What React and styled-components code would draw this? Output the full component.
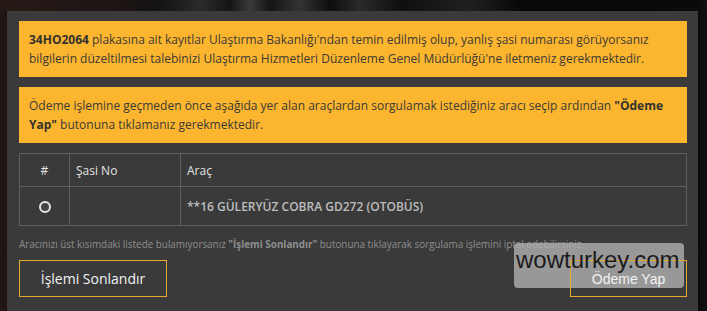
import React, { useState } from "react";
import styled, { createGlobalStyle } from "styled-components";

const GlobalStyle = createGlobalStyle`
  html, body {
    margin: 0;
    padding: 0;
    height: 100%;
  }
  body {
    background: linear-gradient(90deg, #221715 0px, #1e1513 7px, #141010 60px, #0c0c0c 200px, #0a0a0a 698px, #111 707px);
    font-family: "Open Sans", "Noto Sans", sans-serif;
    overflow: hidden;
  }
`;

const Backdrop = styled.div`
  width: 707px;
  height: 311px;
  display: flex;
  flex-direction: column;
  background: linear-gradient(90deg, #261a17 0, #1e1514 110px, #141212 160px, #2b2b2b 200px, #141414 230px, #3a3a3a 250px, #151515 270px, #333 300px, #0e0e0e 330px, #2a2a2a 360px, #0f0f0f 400px, #202020 470px, #080808 520px, #0a0a0a 698px, #121212 707px) top / 707px 11px no-repeat;
`;

const Panel = styled.div`
  margin: 11px 0 0 7px;
  width: 691px;
  flex: 1;
  box-sizing: border-box;
  background: #3a3a3a;
  padding: 10px 11px 0 12px;
  display: flex;
  flex-direction: column;
  position: relative;
`;

const Notice = styled.div`
  background: #fbb52f;
  color: #3c3a36;
  font-size: 12px;
  line-height: 19px;
  padding: 9px 10px;
  margin-bottom: 10px;
  b {
    font-weight: 700;
    color: #34322e;
  }
`;

const Table = styled.table`
  border-collapse: collapse;
  width: 100%;
  color: #dcdcdc;
  font-size: 12px;
`;

const Cell = styled.td`
  border: 1px solid #5e5e5e;
  padding: 0 6px;
  height: ${(p) => (p.$head ? "33px" : "39px")};
  width: ${(p) => p.$w || "auto"};
  text-align: ${(p) => (p.$center ? "center" : "left")};
  font-weight: ${(p) => (p.$bold ? 600 : 400)};
  color: ${(p) => (p.$bold ? "#bdbdbd" : "#e2e2e2")};
  box-sizing: border-box;
`;

const Radio = styled.span`
  display: inline-block;
  width: 8px;
  height: 8px;
  border-radius: 50%;
  border: 2px solid #e6e6e6;
  background: #444;
  vertical-align: middle;
`;

const Footnote = styled.p`
  margin: 12px 0 0 0;
  font-size: 9.9px;
  line-height: 12px;
  color: #8e8e8e;
  white-space: nowrap;
  b {
    font-weight: 700;
  }
`;

const Actions = styled.div`
  margin-top: 10px;
  display: flex;
  justify-content: space-between;
`;

const Button = styled.button`
  all: unset;
  box-sizing: border-box;
  height: 37px;
  width: ${(p) => p.$w};
  border: 1px solid #e5a930;
  color: #f2f2f2;
  font-family: ${(p) =>
    p.$arial ? '"Liberation Sans", Arial, sans-serif' : '"Open Sans", sans-serif'};
  font-size: 14px;
  display: flex;
  align-items: center;
  justify-content: center;
  position: relative;
  z-index: 2;
  cursor: pointer;
`;

const Watermark = styled.div`
  position: absolute;
  left: 507px;
  top: 232px;
  width: 170px;
  height: 45px;
  border-radius: 4px;
  background: rgba(176, 176, 176, 0.8);
  z-index: 1;
`;

const WatermarkText = styled.span`
  position: absolute;
  left: 509px;
  top: 235px;
  z-index: 3;
  font-family: "Liberation Sans", Arial, sans-serif;
  font-size: 24px;
  line-height: 28px;
  color: #1b1b1b;
`;

export default function App() {
  const [selected, setSelected] = useState(false);

  return (
    <>
      <GlobalStyle />
      <Backdrop>
        <Panel>
          <Notice>
            <b>34HO2064</b> plakasına ait kayıtlar Ulaştırma Bakanlığı'ndan temin edilmiş olup, yanlış şasi numarası görüyorsanız bilgilerin düzeltilmesi talebinizi Ulaştırma Hizmetleri Düzenleme Genel Müdürlüğü'ne iletmeniz gerekmektedir.
          </Notice>
          <Notice>
            Ödeme işlemine geçmeden önce aşağıda yer alan araçlardan sorgulamak istediğiniz aracı seçip ardından <b>"Ödeme Yap"</b> butonuna tıklamanız gerekmektedir.
          </Notice>
          <Table>
            <tbody>
              <tr>
                <Cell $head $center $w="50px">#</Cell>
                <Cell $head $w="111px">Şasi No</Cell>
                <Cell $head>Araç</Cell>
              </tr>
              <tr>
                <Cell $center onClick={() => setSelected(!selected)}>
                  <Radio style={{ background: selected ? "#e6e6e6" : "#444" }} />
                </Cell>
                <Cell />
                <Cell $bold>**16 GÜLERYÜZ COBRA GD272 (OTOBÜS)</Cell>
              </tr>
            </tbody>
          </Table>
          <Footnote>
            Aracınızı üst kısımdaki listede bulamıyorsanız <b>"İşlemi Sonlandır"</b> butonuna tıklayarak sorgulama işlemini iptal edebilirsiniz.
          </Footnote>
          <Actions>
            <Button $w="148px">İşlemi Sonlandır</Button>
            <Button $w="117px" $arial>Ödeme Yap</Button>
          </Actions>
          <Watermark />
          <WatermarkText>wowturkey.com</WatermarkText>
        </Panel>
      </Backdrop>
    </>
  );
}
